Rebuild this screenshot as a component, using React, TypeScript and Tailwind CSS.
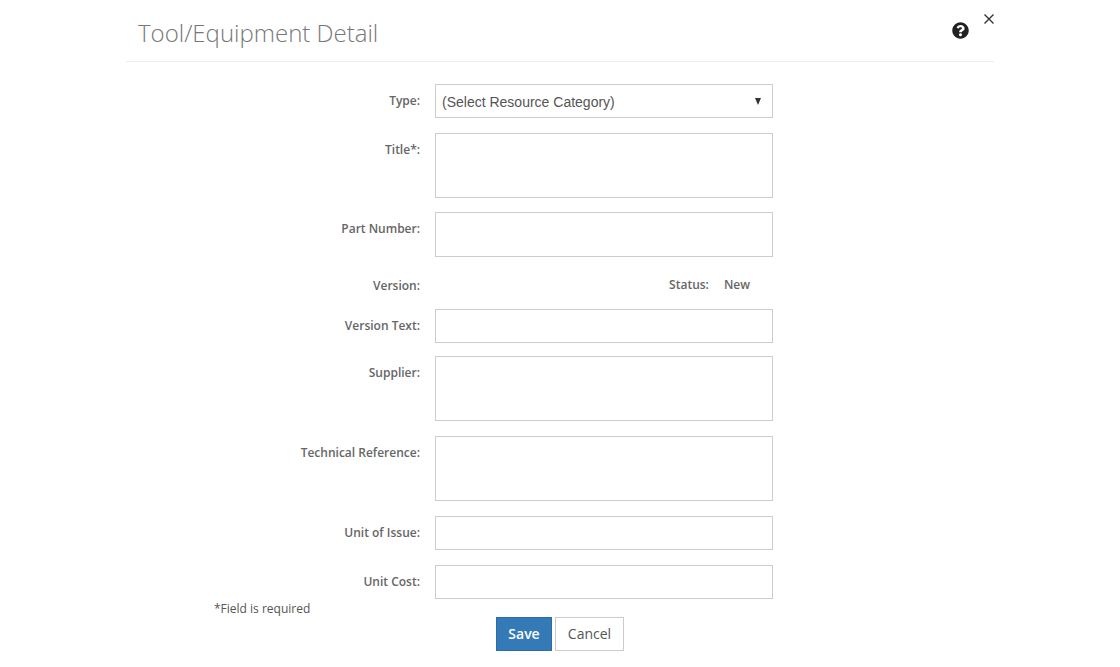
import { FaQuestionCircle } from "react-icons/fa";

const inputClass = "block w-[338px] border border-[#ccc] bg-white";
const labelClass = "w-[309px] pr-[15px] text-right text-[12px] leading-[20px] font-semibold text-[#666]";

interface FieldProps {
  label: string;
  boxClass: string;
  rowClass: string;
}

const Field = ({ label, boxClass, rowClass }: FieldProps) => {
  return (
    <div className={`flex ${rowClass}`}>
      <label className={`${labelClass} pt-[7px]`}>{label}</label>
      <div className={`${inputClass} ${boxClass}`} />
    </div>
  );
};

const App = () => {
  return (
    <div className="h-[667px] w-[1120px] overflow-hidden bg-white font-['Open_Sans',sans-serif] text-[#555]">
      <div className="ml-[126px] w-[868px]">
        <div className="relative flex h-[62px] items-start justify-between border-b border-[#eee] pl-[12px]">
          <h1 className="pt-[16px] text-[24px] leading-[34px] font-light text-[#777]">
            Tool/Equipment Detail
          </h1>
          <FaQuestionCircle className="mt-[22px] mr-[25px] text-[17px] text-[#222]" />
          <button className="absolute top-[11px] right-[-3px] text-[#333]">
            <svg width="16" height="16" viewBox="0 0 16 16" fill="none" stroke="currentColor" strokeWidth="1.4">
              <path d="M3.5 3.5L12.5 12.5M12.5 3.5L3.5 12.5" />
            </svg>
          </button>
        </div>

        <div className="pt-[22px]">
          <div className="flex">
            <label className={`${labelClass} pt-[7px]`}>Type:</label>
            <div className={`${inputClass} flex h-[34px] items-center justify-between pr-[11px] pl-[6px] font-['Liberation_Sans',sans-serif] text-[14px] text-[#555]`}>
              <span className="translate-y-px">(Select Resource Category)</span>
              <span className="h-0 w-0 border-x-[3.5px] border-t-[7px] border-x-transparent border-t-[#333]" />
            </div>
          </div>
          <Field label="Title*:" boxClass="h-[65px]" rowClass="mt-[15px]" />
          <Field label="Part Number:" boxClass="h-[45px]" rowClass="mt-[14px]" />

          <div className="mt-[18px] flex h-[20px] translate-y-px text-[12px] leading-[20px]">
            <label className={labelClass}>Version:</label>
            <div className="flex w-[338px] justify-end pr-[23px] font-semibold text-[#666]">
              <span className="mr-[15px] -translate-y-px">Status:</span>
              <span className="-translate-y-px">New</span>
            </div>
          </div>

          <Field label="Version Text:" boxClass="h-[34px]" rowClass="mt-[14px]" />
          <Field label="Supplier:" boxClass="h-[65px]" rowClass="mt-[13px]" />
          <Field label="Technical Reference:" boxClass="h-[65px]" rowClass="mt-[15px]" />
          <Field label="Unit of Issue:" boxClass="h-[34px]" rowClass="mt-[15px]" />
          <Field label="Unit Cost:" boxClass="h-[34px]" rowClass="mt-[15px]" />

          <p className="mt-px ml-[88px] h-[17px] text-[12px] leading-[18px] font-normal text-[#555]">
            *Field is required
          </p>

          <div className="ml-[370px] flex gap-[3px]">
            <button className="h-[34px] w-[56px] border border-[#2e6da4] bg-[#337ab7] pb-[2px] text-[14px] font-semibold text-white">
              Save
            </button>
            <button className="h-[34px] w-[69px] border border-[#ccc] bg-white pb-[2px] text-[14px] text-[#555]">
              Cancel
            </button>
          </div>
        </div>
      </div>
    </div>
  );
};

export default App;
